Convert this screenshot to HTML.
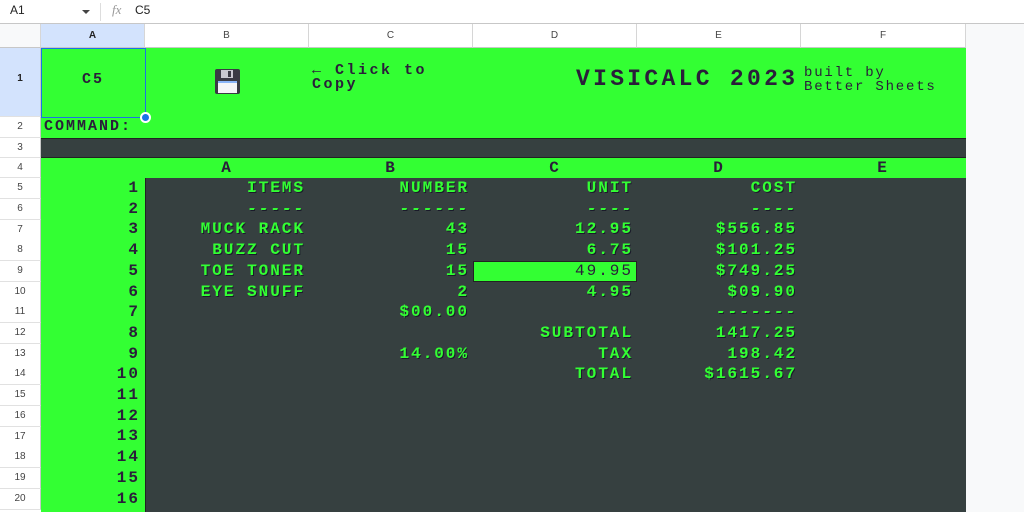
<!DOCTYPE html>
<html><head><meta charset="utf-8"><style>
*{margin:0;padding:0;box-sizing:border-box}
html,body{width:1024px;height:512px;overflow:hidden}
body{background:#fff;font-family:"Liberation Sans",sans-serif;position:relative}
.a{position:absolute}
.rh{position:absolute;left:0;width:41px;background:#fff;border-bottom:1px solid #e1e1e1;border-right:1px solid #c7c7c7;font-size:10px;color:#444;text-align:center}
.ch{position:absolute;top:24px;height:24px;border-right:1px solid #d6d6d6;border-bottom:1px solid #c7c7c7;font-size:10px;color:#444;text-align:center;line-height:23px;background:#fff}
.m{font-family:"Liberation Mono",monospace;font-weight:bold;font-size:16px;letter-spacing:2px;line-height:20px;white-space:pre}
.g{color:#33ff33;text-shadow:1px 1px 0 #1a1a2a,0.5px 0 0 #33ff33}
.d{color:#2a1e3a}
.r{text-align:right}
</style></head><body>
<div class="a" style="left:0;top:0;width:1024px;height:24px;border-bottom:1px solid #c7c7c7;background:#fff"></div>
<div class="a" style="left:10px;top:3px;font-size:12px;color:#222">A1</div>
<div class="a" style="left:82px;top:10px;width:0;height:0;border-left:4px solid transparent;border-right:4px solid transparent;border-top:4px solid #444"></div>
<div class="a" style="left:100px;top:3px;width:1px;height:18px;background:#ddd"></div>
<div class="a" style="left:112px;top:2px;font-size:13px;color:#999;font-style:italic;font-family:'Liberation Serif',serif">fx</div>
<div class="a" style="left:135px;top:3px;font-size:12px;color:#222">C5</div>
<div class="a" style="left:966px;top:24px;width:58px;height:488px;background:#f8f9fa"></div>
<div class="ch" style="left:0;width:41px;background:#f8f9fa"></div>
<div class="ch" style="left:41px;width:104px;background:#d3e3fd;font-weight:bold;color:#222">A</div>
<div class="ch" style="left:145px;width:164px">B</div>
<div class="ch" style="left:309px;width:164px">C</div>
<div class="ch" style="left:473px;width:164px">D</div>
<div class="ch" style="left:637px;width:164px">E</div>
<div class="ch" style="left:801px;width:165px">F</div>
<div class="rh" style="top:48px;height:69px;line-height:62px;background:#d3e3fd;color:#222;font-weight:bold">1</div>
<div class="rh" style="top:117px;height:21px;line-height:20px">2</div>
<div class="rh" style="top:138px;height:20px;line-height:19px">3</div>
<div class="rh" style="top:158px;height:20px;line-height:19px">4</div>
<div class="rh" style="top:178px;height:21px;line-height:20px">5</div>
<div class="rh" style="top:199px;height:21px;line-height:20px">6</div>
<div class="rh" style="top:220px;height:21px;line-height:20px">7</div>
<div class="rh" style="top:240px;height:21px;line-height:20px">8</div>
<div class="rh" style="top:261px;height:21px;line-height:20px">9</div>
<div class="rh" style="top:282px;height:21px;line-height:20px">10</div>
<div class="rh" style="top:302px;height:21px;line-height:20px">11</div>
<div class="rh" style="top:323px;height:21px;line-height:20px">12</div>
<div class="rh" style="top:344px;height:21px;line-height:20px">13</div>
<div class="rh" style="top:364px;height:21px;line-height:20px">14</div>
<div class="rh" style="top:385px;height:21px;line-height:20px">15</div>
<div class="rh" style="top:406px;height:21px;line-height:20px">16</div>
<div class="rh" style="top:427px;height:21px;line-height:20px">17</div>
<div class="rh" style="top:447px;height:21px;line-height:20px">18</div>
<div class="rh" style="top:468px;height:21px;line-height:20px">19</div>
<div class="rh" style="top:489px;height:21px;line-height:20px">20</div>
<div class="a" style="left:41px;top:48px;width:925px;height:90px;background:#33ff33"></div>
<div class="a" style="left:41px;top:138px;width:925px;height:20px;background:#364040;border-top:1px solid #222;border-bottom:1px solid #222"></div>
<div class="a" style="left:41px;top:158px;width:925px;height:20px;background:#33ff33"></div>
<div class="a" style="left:41px;top:178px;width:104px;height:334px;background:#33ff33"></div>
<div class="a" style="left:145px;top:178px;width:821px;height:334px;background:#364040;border-left:1px solid #222"></div>
<div class="a" style="left:41px;top:48px;width:105px;height:70px;border:1px solid #1a73e8"></div>
<div class="a" style="left:140px;top:112px;width:11px;height:11px;border-radius:50%;background:#1a73e8;border:2px solid #fff"></div>
<div class="a m d" style="left:41px;top:70px;width:104px;text-align:center;font-size:15px">C5</div>
<svg class="a" style="left:215px;top:69px" width="25" height="25" viewBox="0 0 25 25">
<rect x="0" y="0" width="25" height="25" rx="2" fill="#3a3a44"/>
<rect x="6" y="1" width="12" height="8" fill="#c8c8d0"/>
<rect x="13" y="2" width="3" height="6" fill="#3a3a44"/>
<rect x="3" y="12" width="19" height="12" fill="#f4f4f8"/>
<rect x="3" y="12" width="19" height="2" fill="#8ab4f8"/>
</svg>
<div class="a m d" style="left:312px;top:64px;font-size:15px;line-height:14px;letter-spacing:2.5px">← Click to
Copy</div>
<div class="a m d" style="left:576px;top:67px;font-size:23px;letter-spacing:3.3px;line-height:24px">VISICALC 2023</div>
<div class="a m d" style="left:804px;top:66px;font-weight:normal;font-size:14px;letter-spacing:1.8px;line-height:14px">built by
Better Sheets</div>
<div class="a m d" style="left:44px;top:117px;font-size:15px">COMMAND:</div>
<div class="a m d" style="left:145px;top:158px;width:164px;text-align:center">A</div>
<div class="a m d" style="left:309px;top:158px;width:164px;text-align:center">B</div>
<div class="a m d" style="left:473px;top:158px;width:164px;text-align:center">C</div>
<div class="a m d" style="left:637px;top:158px;width:164px;text-align:center">D</div>
<div class="a m d" style="left:801px;top:158px;width:164px;text-align:center">E</div>
<div class="a" style="left:473px;top:261px;width:164px;height:21px;background:#33ff33;border:1px solid #222"></div>
<div class="a m d r" style="left:41px;top:178px;width:99px;line-height:20.7px">1
2
3
4
5
6
7
8
9
10
11
12
13
14
15
16</div>
<div class="a m g r" style="left:145px;top:178px;width:160px;line-height:20.7px">ITEMS
-----
MUCK RACK
BUZZ CUT
TOE TONER
EYE SNUFF</div>
<div class="a m g r" style="left:309px;top:178px;width:160px;line-height:20.7px">NUMBER
------
43
15
15
2
$00.00

14.00%</div>
<div class="a m g r" style="left:473px;top:178px;width:160px;line-height:20.7px">UNIT
----
12.95
6.75
<span style="color:#2a1e3a;text-shadow:none;font-weight:normal">49.95</span>
4.95

SUBTOTAL
TAX
TOTAL</div>
<div class="a m g r" style="left:637px;top:178px;width:160px;line-height:20.7px">COST
----
$556.85
$101.25
$749.25
$09.90
-------
1417.25
198.42
$1615.67</div>
</body></html>
